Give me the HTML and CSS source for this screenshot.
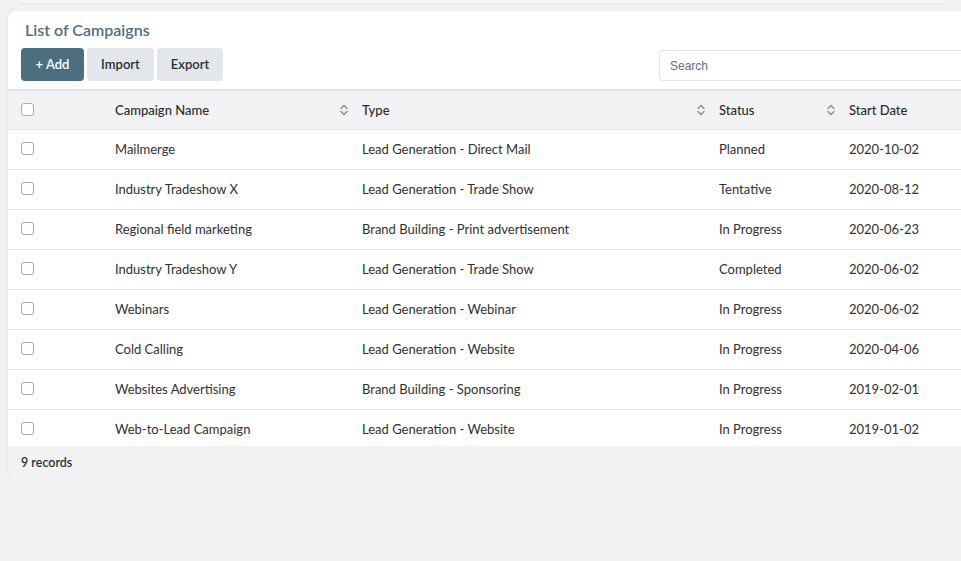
FILE: index.html
```html
<!DOCTYPE html>
<html lang="en">
<head>
<meta charset="utf-8">
<title>List of Campaigns</title>
<link rel="stylesheet" href="styles.css">
</head>
<body>
<div class="prev-strip"></div>
<section class="card">
  <h1 class="card-title">List of Campaigns</h1>
  <div class="toolbar">
    <div class="btn-group">
      <button class="btn btn-primary">+ Add</button>
      <button class="btn btn-light">Import</button>
      <button class="btn btn-light">Export</button>
    </div>
    <input class="search" type="text" placeholder="Search">
  </div>
  <div class="table-wrap">
    <table class="grid">
      <colgroup>
        <col class="c-check"><col class="c-name"><col class="c-type"><col class="c-status"><col class="c-date">
      </colgroup>
      <thead>
        <tr>
          <th class="cell-check"><span class="box"></span></th>
          <th><div class="th-inner"><span>Campaign Name</span><svg class="sort" viewBox="0 0 8 12" width="8" height="12"><path d="M1 4.5 4 1.5 7 4.5M1 7.5 4 10.5 7 7.5" fill="none" stroke="#8a8d92" stroke-width="1.4" stroke-linecap="round" stroke-linejoin="round"/></svg></div></th>
          <th><div class="th-inner"><span>Type</span><svg class="sort" viewBox="0 0 8 12" width="8" height="12"><path d="M1 4.5 4 1.5 7 4.5M1 7.5 4 10.5 7 7.5" fill="none" stroke="#8a8d92" stroke-width="1.4" stroke-linecap="round" stroke-linejoin="round"/></svg></div></th>
          <th><div class="th-inner"><span>Status</span><svg class="sort" viewBox="0 0 8 12" width="8" height="12"><path d="M1 4.5 4 1.5 7 4.5M1 7.5 4 10.5 7 7.5" fill="none" stroke="#8a8d92" stroke-width="1.4" stroke-linecap="round" stroke-linejoin="round"/></svg></div></th>
          <th><div class="th-inner"><span>Start Date</span></div></th>
        </tr>
      </thead>
      <tbody>
        <tr><td class="cell-check"><span class="box"></span></td><td>Mailmerge</td><td>Lead Generation - Direct Mail</td><td>Planned</td><td>2020-10-02</td></tr>
        <tr><td class="cell-check"><span class="box"></span></td><td>Industry Tradeshow X</td><td>Lead Generation - Trade Show</td><td>Tentative</td><td>2020-08-12</td></tr>
        <tr><td class="cell-check"><span class="box"></span></td><td>Regional field marketing</td><td>Brand Building - Print advertisement</td><td>In Progress</td><td>2020-06-23</td></tr>
        <tr><td class="cell-check"><span class="box"></span></td><td>Industry Tradeshow Y</td><td>Lead Generation - Trade Show</td><td>Completed</td><td>2020-06-02</td></tr>
        <tr><td class="cell-check"><span class="box"></span></td><td>Webinars</td><td>Lead Generation - Webinar</td><td>In Progress</td><td>2020-06-02</td></tr>
        <tr><td class="cell-check"><span class="box"></span></td><td>Cold Calling</td><td>Lead Generation - Website</td><td>In Progress</td><td>2020-04-06</td></tr>
        <tr><td class="cell-check"><span class="box"></span></td><td>Websites Advertising</td><td>Brand Building - Sponsoring</td><td>In Progress</td><td>2019-02-01</td></tr>
        <tr><td class="cell-check"><span class="box"></span></td><td>Web-to-Lead Campaign</td><td>Lead Generation - Website</td><td>In Progress</td><td>2019-01-02</td></tr>
      </tbody>
    </table>
  </div>
  <div class="card-footer">9 records</div>
</section>
</body>
</html>
```

FILE: styles.css
```css
* { box-sizing: border-box; }

html, body {
  margin: 0;
  padding: 0;
  background: #f1f1f3;
  overflow: hidden;
  font-family: Lato, "Noto Sans", sans-serif;
  color: #2f3033;
}

.prev-strip {
  height: 3px;
  margin: 0 16px 0 20px;
  background: #f5f5f7;
  box-shadow: 0 1px 2px rgba(0, 0, 0, 0.05);
}

.card {
  width: 1100px;
  margin: 8px 0 0 8px;
  background: #fff;
  border-radius: 8px;
  box-shadow: 0 1px 3px rgba(0, 0, 0, 0.08);
  overflow: hidden;
}

.card-title {
  margin: 0;
  padding: 9px 17px 0;
  height: 29px;
  line-height: 20px;
  font-size: 16px;
  font-weight: 600;
  color: #4a6f80;
}

.toolbar {
  display: flex;
  align-items: center;
  padding: 8px 0 0 13px;
}

.btn-group {
  display: flex;
  gap: 3px;
}

.btn {
  height: 33px;
  padding: 0 13px 1px;
  border: 0;
  border-radius: 4px;
  font-family: inherit;
  font-size: 13px;
  font-weight: 600;
  cursor: pointer;
}

.btn-primary {
  width: 63px;
  background: #4b6f7f;
  color: #fff;
}

.btn-light {
  background: #e3e6eb;
  color: #2f3033;
}

.btn-light:nth-child(2) { width: 67px; }
.btn-light:nth-child(3) { width: 66px; }

.search {
  margin: 2px 0 0 436px;
  width: 400px;
  height: 31px;
  padding: 0 10px;
  border: 1px solid #e2e3e6;
  border-radius: 4px;
  font-family: "Liberation Sans", sans-serif;
  font-size: 12px;
  color: #333;
  outline: none;
}

.search::placeholder { color: #6d6f73; }

.table-wrap {
  margin-top: 8px;
  height: 357px;
  overflow: hidden;
  border-top: 2px solid #e1e5ea;
}

.grid {
  width: 100%;
  border-collapse: separate;
  border-spacing: 0;
  table-layout: fixed;
  font-size: 13px;
}

.c-check { width: 97px; }
.c-name { width: 247px; }
.c-type { width: 357px; }
.c-status { width: 130px; }
.c-date { width: auto; }

.grid th {
  height: 39px;
  padding: 0 10px 1px;
  background: #f2f2f4;
  border-bottom: 1px solid #e3e4e7;
  text-align: left;
  font-weight: 500;
  color: #2a2b2e;
}

.th-inner {
  display: flex;
  align-items: center;
  justify-content: space-between;
  margin-right: -6px;
}

.sort { display: block; }

.grid td {
  height: 40px;
  padding: 0 10px 2px;
  border-bottom: 1px solid #e4e4e7;
  white-space: nowrap;
  color: #2f3033;
}

.grid .cell-check { padding-left: 13px; }

.box {
  display: block;
  width: 13px;
  height: 13px;
  border: 1px solid #a9abaf;
  border-radius: 3px;
  background: #fff;
}

.card-footer {
  height: 32px;
  padding-left: 13px;
  display: flex;
  align-items: center;
  background: #f2f2f4;
  font-size: 12.5px;
  font-weight: 600;
  color: #2f3033;
}
```
